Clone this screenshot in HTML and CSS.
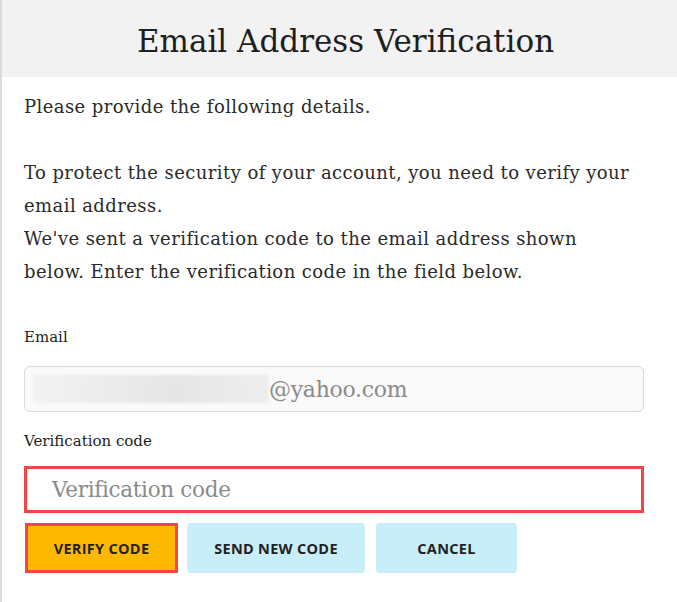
FILE: index.html
```html
<!DOCTYPE html>
<html lang="en">
<head>
<meta charset="utf-8">
<title>Email Address Verification</title>
<link rel="stylesheet" href="styles.css">
</head>
<body>
<div class="panel">
  <header class="head">
    <h1 class="title">Email Address Verification</h1>
  </header>
  <main class="content">
    <p class="intro">Please provide the following details.</p>
    <p class="intro gap">To protect the security of your account, you need to verify your email address.<br>We've sent a verification code to the email address shown below. Enter the verification code in the field below.</p>

    <label class="label first">Email</label>
    <div class="email-box">
      <span class="blur"></span>
      <span class="email-text">@yahoo.com</span>
    </div>

    <label class="label">Verification code</label>
    <div class="code-box">
      <span class="placeholder">Verification code</span>
    </div>

    <div class="actions">
      <button class="btn btn-verify">VERIFY CODE</button>
      <button class="btn btn-light btn-send">SEND NEW CODE</button>
      <button class="btn btn-light btn-cancel">CANCEL</button>
    </div>
  </main>
</div>
</body>
</html>
```
FILE: styles.css
```css
html, body {
  margin: 0;
  padding: 0;
  background: #ffffff;
}

body {
  font-family: "DejaVu Serif", "Liberation Serif", serif;
  color: #222222;
  height: 602px;
  overflow: hidden;
}

.panel {
  border-left: 2px solid #dcdcdc;
  min-height: 602px;
  box-sizing: border-box;
}

.head {
  background: #f2f2f2;
  height: 77px;
  display: flex;
  align-items: center;
  justify-content: center;
  padding-left: 12px;
}

.title {
  margin: 0;
  font-weight: normal;
  font-size: 31px;
  color: #1e1e1e;
  padding-top: 4px;
}

.content {
  padding: 13px 0 0 22px;
  width: 620px;
}

.intro {
  margin: 0;
  max-width: 612px;
  font-size: 18px;
  line-height: 33px;
  letter-spacing: 0.42px;
  color: #2a2a2a;
}

.intro.gap {
  margin-top: 33px;
}

.label {
  display: block;
  font-size: 15px;
  line-height: 20px;
  margin-top: 19px;
  color: #222;
  letter-spacing: 0;
}

.label.first {
  margin-top: 39px;
}

.email-box {
  margin-top: 19px;
  height: 46px;
  box-sizing: border-box;
  border: 1px solid #dadada;
  border-radius: 6px;
  background: #fafafa;
  display: flex;
  align-items: center;
  padding-left: 8px;
}

.blur {
  width: 236px;
  height: 28px;
  background: linear-gradient(90deg, #f2f2f2 0%, #e6e6e6 60%, #eeeeee 100%);
  filter: blur(1px);
}

.email-text {
  font-size: 22px;
  color: #8a8a8a;
  letter-spacing: -0.3px;
}

.code-box {
  margin-top: 15px;
  height: 47px;
  box-sizing: border-box;
  border: 3px solid #f44546;
  background: #ffffff;
  display: flex;
  align-items: center;
  padding-left: 25px;
  width: 620px;
}

.placeholder {
  font-size: 21.5px;
  color: #8a8a8a;
  letter-spacing: -0.3px;
}

.actions {
  display: flex;
  gap: 9px;
  margin-top: 10px;
}

.btn {
  height: 50px;
  box-sizing: border-box;
  border: none;
  font-family: "Open Sans", "Liberation Sans", sans-serif;
  font-weight: 700;
  font-size: 14.5px;
  color: #222222;
  letter-spacing: 0.3px;
  cursor: pointer;
  padding: 0;
}

.btn-verify {
  width: 153px;
  background: #ffb800;
  border: 3px solid #f44546;
  margin-left: 1px;
}

.btn-light {
  background: #c8eef9;
  border-radius: 4px;
}

.btn-send {
  width: 178px;
}

.btn-cancel {
  width: 141px;
  margin-left: 2px;
}
```
